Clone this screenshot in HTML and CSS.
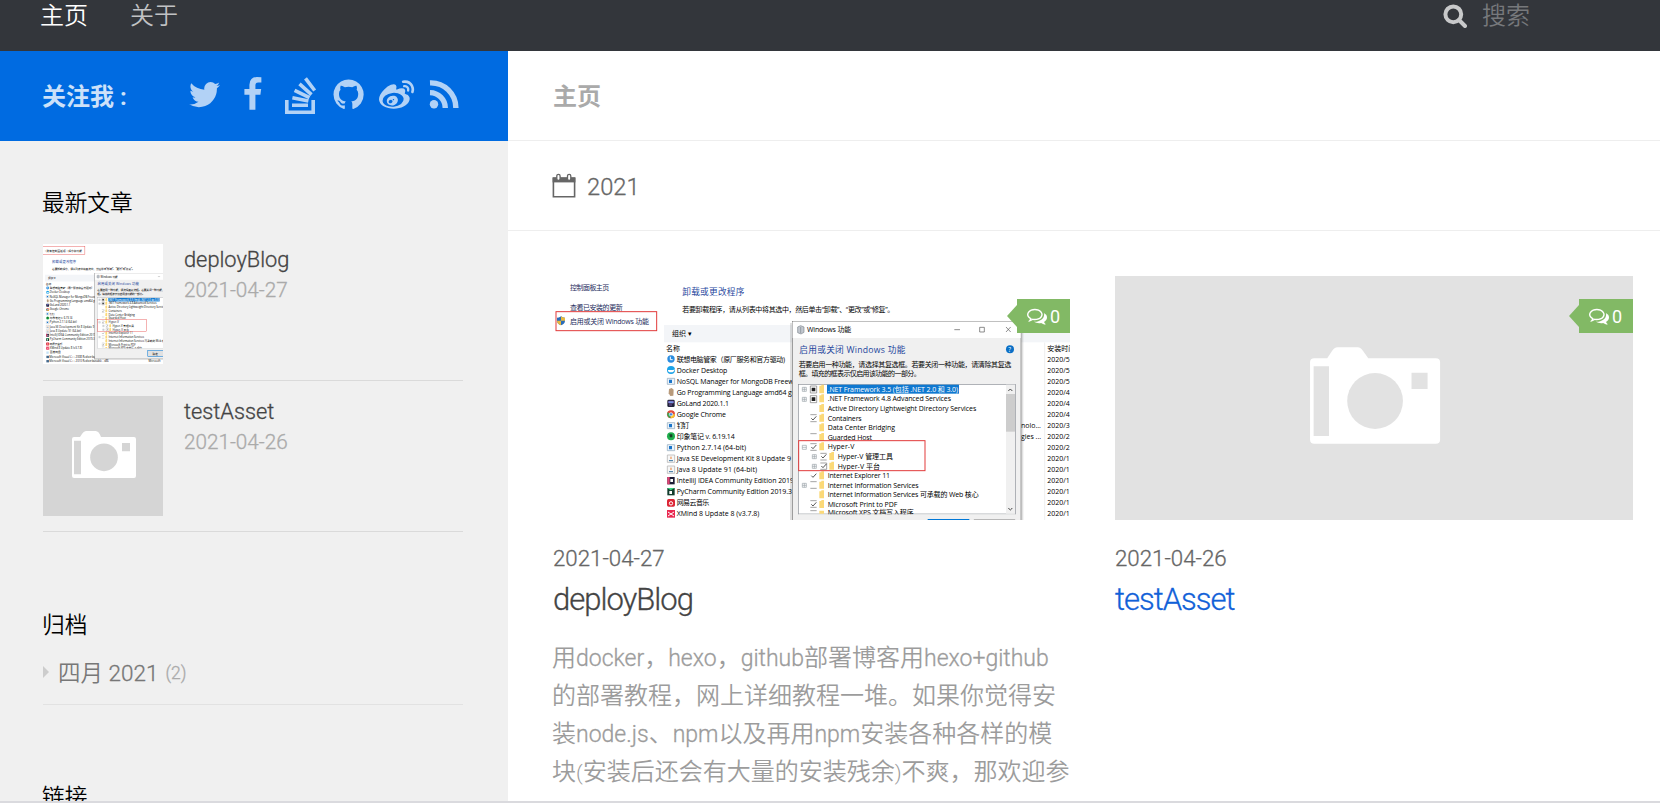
FILE: index.html
```html
<!DOCTYPE html>
<html lang="zh-CN">
<head>
<meta charset="utf-8">
<title>主页</title>
<link rel="stylesheet" href="styles.css">
</head>
<body>
<svg class="defs" aria-hidden="true">
  <symbol id="comments" viewBox="0 0 1792 1792"><path d="M704 384q-153 0-286 52t-211.500 141-78.500 191q0 82 53 158t149 132l97 56-35 84q34-20 62-39l44-31 53 10q78 14 153 14 153 0 286-52t211.500-141 78.500-191-78.500-191-211.500-141-286-52zm0-128q191 0 353.500 68.500t256.500 186.500 94 257-94 257-256.500 186.500-353.500 68.500q-86 0-176-16-124 88-278 128-36 9-86 16h-3q-11 0-20.500-8t-11.500-21q-1-3-1-6.500t.5-6.500 2-6l2.500-5 3.500-5.500 4-5 4.500-5 4-4.500q5-6 23-25t26-29.500 22.500-29 25-38.500 20.500-44q-124-72-195-177t-71-224q0-139 94-257t256.500-186.500 353.500-68.500zm822 1169q10 24 20.500 44t25 38.500 22.500 29 26 29.500 23 25q1 1 4 4.500t4.500 5 4 5 3.500 5.500l2.500 5 2 6 .5 6.500-1 6.500q-3 14-13 22t-22 7q-50-7-86-16-154-40-278-128-90 16-176 16-271 0-472-132 58 4 88 4 161 0 309-45t264-129q125-92 192-212t67-254q0-77-23-152 129 71 204 178t75 230q0 120-71 224.500t-195 176.500z"/></symbol>
  <g id="shot" transform="translate(540 265) scale(.33333)">
    <rect x="-60" y="-60" width="1740" height="960" fill="#fff"/>
    <rect x="345" y="-40" width="335" height="66" class="mark"/>
    <text x="372" y="4" class="st" textLength="286">› 所有控制面板项 › 程序和功能</text>
    <text x="90" y="76" class="st navy" textLength="118">控制面板主页</text>
    <text x="90" y="136" class="st navy" textLength="158">查看已安装的更新</text>
    <path d="M51 158q12-1 12-5 1 4 12 5v9q0 9-12 14-12-5-12-14z" fill="#2b6cb8"/><path d="M63 153q1 4 12 5v9H63zM51 167h12v14q-12-5-12-14z" fill="#e8b93c"/>
    <text x="90" y="176" class="st navy" textLength="237">启用或关闭 Windows 功能</text>
    <rect x="48" y="140" width="302" height="57" class="mark"/>
    <text x="427" y="91" class="st head" textLength="186">卸载或更改程序</text>
    <text x="427" y="142" class="st" textLength="636">若要卸载程序，请从列表中将其选中，然后单击“卸载”、“更改”或“修复”。</text>
    <rect x="372" y="180" width="1300" height="52" fill="#f3f5f8"/>
    <text x="396" y="212" class="st">组织 ▾</text>
    <text x="378" y="257" class="st">名称</text>
    <path d="M1514 233V900" stroke="#e5e5e5" stroke-width="2"/>
    <circle cx="393" cy="282" r="11" fill="#2a8de0"/><path d="M391 275v9h7" stroke="#fff" stroke-width="3" fill="none"/>
    <circle cx="393" cy="315" r="12" fill="#1ba3e8"/><path d="M384 315h16l4-3q-1 10-11 10t-9-7z" fill="#fff"/>
    <g fill="#eaf3fb" stroke="#8ba4b8" stroke-width="2"><path d="M382 340h22v18h-22zM382 473h22v18h-22zM382 539h22v18h-22z"/></g>
    <path d="M387 344h9v10h-9zM387 477h9v10h-9zM387 543h9v10h-9z" fill="#1b75c9"/>
    <path d="M387 372l8-3 6 5-1 18-9 1-5-8z" fill="#b89a7b"/>
    <rect x="382" y="404" width="22" height="22" rx="4" fill="#20243a"/><path d="M386 409h14v5h-14zM387 420h9" stroke="#a869dd" stroke-width="2" fill="#4eb7e8"/>
    <circle cx="393" cy="448" r="12" fill="#e34b3c"/><path d="M393 448l-10-6q-5 12 8 18z" fill="#36a853"/><path d="M393 448h12q-1 12-13 12z" fill="#f7c52b"/><circle cx="393" cy="448" r="5" fill="#4285e8" stroke="#fff" stroke-width="2"/>
    <circle cx="393" cy="514" r="12" fill="#1fae4c"/><path d="M388 508h9v9h-7z" fill="#163e25"/>
    <g fill="#f7f7f7" stroke="#aaa" stroke-width="2"><path d="M382 570h22v22h-22zM382 603h22v22h-22z"/></g>
    <path d="M387 587h12M387 620h12" stroke="#35719f" stroke-width="3"/><path d="M393 575v7M393 608v7" stroke="#e97e31" stroke-width="3"/>
    <rect x="382" y="636" width="22" height="22" fill="#1d1c35"/><path d="M382 636h7v22h-7z" fill="#e44374"/><path d="M391 642h8v9h-8z" fill="#fff"/>
    <rect x="382" y="669" width="22" height="22" fill="#123d2d"/><path d="M382 669h22l-12 7z" fill="#39d681"/><path d="M388 678h8v9h-8z" fill="#fff"/>
    <rect x="381" y="702" width="24" height="23" rx="5" fill="#dc2434"/><circle cx="393" cy="715" r="5" fill="none" stroke="#fff" stroke-width="3"/>
    <rect x="381" y="735" width="24" height="23" fill="#e92950"/><path d="M384 741l9 6 9-6M384 753l9-6 9 6" stroke="#fff" stroke-width="3" fill="none"/>
    <rect x="383" y="772" width="18" height="18" fill="#c4e1f5"/><rect x="383" y="805" width="20" height="18" fill="#44698e"/><rect x="383" y="838" width="20" height="18" fill="#44698e"/>
    <g class="st">
      <text x="410" y="290" textLength="325">联想电脑管家（原厂服务和官方驱动)</text>
      <text x="410" y="323" textLength="152">Docker Desktop</text>
      <text x="410" y="356" textLength="382">NoSQL Manager for MongoDB Freeware</text>
      <text x="410" y="389" textLength="386">Go Programming Language amd64 go1.1</text>
      <text x="410" y="422" textLength="157">GoLand 2020.1.1</text>
      <text x="410" y="455" textLength="148">Google Chrome</text>
      <text x="410" y="489" textLength="38">钉钉</text>
      <text x="410" y="522" textLength="174">印象笔记 v. 6.19.14</text>
      <text x="410" y="555" textLength="208">Python 2.7.14 (64-bit)</text>
      <text x="410" y="588" textLength="343">Java SE Development Kit 8 Update 9</text>
      <text x="410" y="621" textLength="241">Java 8 Update 91 (64-bit)</text>
      <text x="410" y="654" textLength="352">IntelliJ IDEA Community Edition 2019</text>
      <text x="410" y="687" textLength="346">PyCharm Community Edition 2019.3</text>
      <text x="410" y="721" textLength="98">网易云音乐</text>
      <text x="410" y="754" textLength="248">XMind 8 Update 8 (v3.7.8)</text>
      <text x="410" y="787">百度网盘</text>
      <text x="405" y="822">Microsoft Visual C++ 2008 Redistributable</text>
      <text x="405" y="855">Microsoft Visual C++ 2010 Redistributable - x86</text>
      <text x="1170" y="855">Microsoft</text>
      <text x="1443" y="489">nolo...</text>
      <text x="1443" y="522">gies ...</text>
      <text x="1522" y="257">安装时间</text>
      <text x="1522" y="290">2020/5</text><text x="1522" y="323">2020/5</text><text x="1522" y="356">2020/5</text><text x="1522" y="389">2020/4</text><text x="1522" y="422">2020/4</text><text x="1522" y="455">2020/4</text><text x="1522" y="489">2020/3</text><text x="1522" y="522">2020/2</text><text x="1522" y="555">2020/2</text><text x="1522" y="588">2020/1</text><text x="1522" y="621">2020/1</text><text x="1522" y="654">2020/1</text><text x="1522" y="687">2020/1</text><text x="1522" y="721">2020/1</text><text x="1522" y="754">2020/1</text>
    </g>
    <rect x="750" y="174" width="700" height="664" fill="#000" opacity=".12"/>
    <rect x="757" y="169" width="686" height="660" fill="#f0f0f0" stroke="#777" stroke-width="2"/>
    <rect x="758" y="170" width="684" height="49" fill="#fff"/>
    <path d="M773 186l9-4 10 4v16l-9 5-10-4z" fill="#c3c8cf" stroke="#7f868e" stroke-width="2"/><path d="M782 186v18" stroke="#7f868e" stroke-width="2"/>
    <text x="801" y="202" class="st" textLength="133">Windows 功能</text>
    <path d="M1243 194h17M1319 187h14v14h-14zM1398 186l14 15m0-15l-14 15" fill="none" stroke="#555" stroke-width="2"/>
    <text x="778" y="263" class="st head" textLength="318">启用或关闭 Windows 功能</text>
    <circle cx="1410" cy="253" r="12" fill="#0a6fc6"/><text x="1405" y="260" class="st q">?</text>
    <text x="776" y="307" class="st" textLength="638">若要启用一种功能，请选择其复选框。若要关闭一种功能，请清除其复选</text>
    <text x="776" y="334" class="st" textLength="366">框。填充的框表示仅启用该功能的一部分。</text>
    <rect x="775" y="358" width="651" height="389" fill="#fff" stroke="#8a8f96" stroke-width="2"/>
    <rect x="1398" y="359" width="27" height="387" fill="#f0f0f0"/><rect x="1398" y="387" width="27" height="113" fill="#cdcdcd"/>
    <path d="M1405 378l6-6 6 6M1405 729l6 6 6-6" fill="none" stroke="#444" stroke-width="3"/>
    <rect x="861" y="359" width="396" height="27" fill="#0f78d0"/>
    <g class="st">
      <text x="863" y="380" textLength="391" fill="#fff">.NET Framework 3.5 (包括 .NET 2.0 和 3.0)</text>
      <text x="863" y="409" textLength="370">.NET Framework 4.8 Advanced Services</text>
      <text x="863" y="438" textLength="446">Active Directory Lightweight Directory Services</text>
      <text x="863" y="467" textLength="102">Containers</text>
      <text x="863" y="496" textLength="202">Data Center Bridging</text>
      <text x="863" y="525" textLength="133">Guarded Host</text>
      <text x="863" y="553" textLength="80">Hyper-V</text>
      <text x="893" y="582" textLength="166">Hyper-V 管理工具</text>
      <text x="893" y="611" textLength="127">Hyper-V 平台</text>
      <text x="863" y="640" textLength="187">Internet Explorer 11</text>
      <text x="863" y="668" textLength="273">Internet Information Services</text>
      <text x="863" y="697" textLength="453">Internet Information Services 可承载的 Web 核心</text>
      <text x="863" y="726" textLength="209">Microsoft Print to PDF</text>
      <text x="863" y="751" textLength="258">Microsoft XPS 文档写入程序</text>
    </g>
    <rect x="776" y="748" width="649" height="12" fill="#f0f0f0"/>
    <path d="M838 362h6v-3h8v26h-14zM838 391h6v-3h8v24h-14zM838 420h6v-3h8v24h-14zM838 449h6v-3h8v24h-14zM838 478h6v-3h8v24h-14zM838 507h6v-3h8v24h-14zM838 535h6v-3h8v24h-14zM868 564h6v-3h8v24h-14zM868 593h6v-3h8v24h-14zM838 622h6v-3h8v24h-14zM838 650h6v-3h8v24h-14zM838 679h6v-3h8v24h-14zM838 708h6v-3h8v24h-14zM838 737h14v9h-14z" fill="#fbd978"/>
    <path d="M811 363h19v21h-19zM811 392h19v21h-19z" fill="#fff" stroke="#777" stroke-width="2"/><path d="M815 368h11v11h-11zM815 397h11v11h-11z" fill="#222"/>
    <path d="M811 449h19m0 21h-19M811 506h19M811 536h19m0 20h-19M841 565h19m0 20h-19M841 594h19v19h-19M811 650h19m0 20h-19M811 707h19m0 20h-19M811 737h19" fill="none" stroke="#777" stroke-width="2"/>
    <path d="M814 460l5 5 10-11M814 546l5 5 10-11M844 574l5 5 10-11M844 603l5 5 10-11M814 632l5 5 10-11M814 718l5 5 10-11" fill="none" stroke="#333" stroke-width="2.500"/>
    <path d="M787 367h12v12h-12zm0 6h12m-6-6v12M787 397h12v12h-12zm0 6h12m-6-6v12M787 541h12v12h-12zm0 6h12M817 569h12v12h-12zm0 6h12m-6-6v12M817 598h12v12h-12zm0 6h12m-6-6v12M787 655h12v12h-12zm0 6h12m-6-6v12" fill="none" stroke="#9aa1a8" stroke-width="2"/>
    <rect x="776" y="527" width="379" height="90" class="mark"/>
    <rect x="1165" y="764" width="121" height="48" fill="#e1e1e1" stroke="#0078d7" stroke-width="4"/><text x="1202" y="796" class="st">确定</text>
    <rect x="1303" y="764" width="121" height="48" fill="#e1e1e1" stroke="#adadad" stroke-width="3"/>
  </g>
</svg>

<div class="page">
  <header class="topbar">
    <nav class="menu"><a class="current">主页</a><a>关于</a></nav>
    <div class="search">
      <svg width="24" height="24" viewBox="0 0 24 24"><circle cx="10.300" cy="10.300" r="7.900"/><path d="M16 16l6 6"/></svg>
      <span>搜索</span>
    </div>
  </header>
  <div class="columns">
    <aside class="sidebar">
      <div class="follow">
        <b>关注我 :</b>
        <div class="social">
          <svg viewBox="0 0 1792 1792"><path d="M1684 408q-67 98-162 167 1 14 1 42 0 130-38 259.500t-115.500 248.500-184.500 210.500-258 146-323 54.500q-271 0-496-145 35 4 78 4 225 0 401-138-105-2-188-64.500t-114-159.500q33 5 61 5 43 0 85-11-112-23-185.500-111.500t-73.500-205.500v-4q68 38 146 41-66-44-105-115t-39-154q0-88 44-163 121 149 294.500 238.500t371.500 99.500q-8-38-8-74 0-134 94.500-228.500t228.500-94.500q140 0 236 102 109-21 205-78-37 115-142 178 93-10 186-50z"/></svg>
          <svg viewBox="0 0 1792 1792"><path d="M1343 12v264h-157q-86 0-116 36t-30 108v189h293l-39 296h-254v759h-306v-759h-255v-296h255v-218q0-186 104-288.500t277-102.500q147 0 228 12z"/></svg>
          <svg viewBox="0 0 35.200 35.200" class="line"><path d="M3.800 23v12.200h26.400V23M9 28.300h16M9.400 20.700l16 3.200M11.600 13.300l14.900 7.400M16.500 6.900l12 10.700M22.500 1.300l9.200 12.200"/></svg>
          <svg viewBox="0 0 1792 1792"><path d="M896 128q209 0 385.500 103t279.500 279.500 103 385.500q0 251-146.500 451.500t-378.500 277.500q-27 5-40-7t-13-30q0-3 .5-76.500t.5-134.500q0-97-52-142 57-6 102.500-18t94-39 81-66.500 53-105 20.500-150.500q0-119-79-206 37-91-8-204-28-9-81 11t-92 44l-38 24q-93-26-192-26t-192 26q-16-11-42.500-27t-83.500-38.500-85-13.500q-45 113-8 204-79 87-79 206 0 85 20.500 150t52.500 105 80.500 67 94 39 102.500 18q-39 36-49 103-21 10-45 15t-57 5-65.500-21.500-55.500-62.500q-19-32-48.500-52t-49.500-24l-20-3q-21 0-29 4.500t-5 11.500 9 14 13 12l7 5q22 10 43.500 38t31.500 51l10 23q13 38 44 61.500t67 30 69.500 7 55.500-3.500l23-4q0 38 .5 88.500t.5 54.500q0 18-13 30t-40 7q-232-77-378.500-277.500t-146.500-451.500q0-209 103-385.500t279.500-279.500 385.500-103z"/></svg>
          <svg viewBox="0 0 1792 1792"><path d="M675 1284q21-34 11-69t-45-50q-34-14-73 1t-60 46q-22 34-13 68.500t43 50.500 74.500 2.500 62.500-50.500zm94-121q8-13 3.500-26.500t-17.500-18.500q-14-5-28.500.5t-21.500 18.500q-17 31 13 45 14 5 29-.5t22-18.500zm174 107q-45 102-158 150t-224 12q-107-34-147.500-126.500t6.500-187.500q47-93 151.500-139t210.500-19q111 29 158.500 119.500t2.500 190.500zm312-160q-9-96-89-170t-208.500-109-274.500-21q-223 23-369.500 141.500t-132.500 264.500q9 96 89 170t208.500 109 274.500 21q223-23 369.500-141.500t132.500-264.500zm308-4q0 68-37 139.500t-109 137-168.500 117.500-226 83-270.500 31-275-33.500-240.500-93-171.500-151-65-199.500q0-115 69.500-245t197.500-258q169-169 341.500-236t246.500 7q65 64 20 209-4 14-1 20t10 7 14.500-.5 13.500-3.500l6-2q139-59 246-59t153 61q45 63 0 178-2 13-4.500 20t4.500 12.500 12 7.500 17 6q57 18 103 47t80 81.500 34 116.500zm-74-624q42 47 54.500 108.500t-6.500 117.500q-8 23-29.500 34t-44.500 4q-23-8-34-29.500t-4-44.500q20-63-24-111t-107-35q-24 5-45-8t-25-37q-5-24 8-44.500t37-25.500q60-13 119 5.500t101 65.500zm181-163q87 96 112.500 222.500t-13.500 241.500q-9 27-34 40t-52 4-40-34-5-52q28-82 10-172t-80-158q-62-69-148-95.500t-173-8.500q-28 6-52-9.500t-30-43.500 9.500-51.500 43.500-29.500q123-26 244 11.500t208 134.500z"/></svg>
          <svg viewBox="0 0 35.200 35.200"><circle cx="7" cy="27.300" r="4.200"/><path class="arc" d="M3 15.600A15.500 15.500 0 0 1 18.300 31M3 5.900A25 25 0 0 1 28.900 31"/></svg>
        </div>
      </div>
      <section class="widget recent">
        <h3>最新文章</h3>
        <article class="post">
          <svg class="thumb" viewBox="659 246 308.500 308.500"><use href="#shot"/></svg>
          <div><h4>deployBlog</h4><time>2021-04-27</time></div>
        </article>
        <article class="post">
          <svg class="thumb" viewBox="129 498 360 360"><path fill="#d5d5d5" d="M129 498h360v360H129z"/><path fill="#fff" d="M222 621h18q10-18 18-18h29q10 0 16 18h99q6 0 6 6v111q0 6-6 6H222q-6 0-6-6V627q0-6 6-6z"/><path fill="#d5d5d5" d="M222 632h21v101h-21zM366 639h24v25h-24z"/><circle cx="312" cy="682" r="41.500" fill="#d5d5d5"/></svg>
          <div><h4>testAsset</h4><time>2021-04-26</time></div>
        </article>
      </section>
      <section class="widget archive">
        <h3>归档</h3>
        <div class="entry"><i></i><span>四月 <span class="num">2021</span></span><small>(2)</small></div>
      </section>
      <section class="widget links"><h3>链接</h3></section>
    </aside>
    <main class="content">
      <div class="crumb">主页</div>
      <div class="year">
        <svg width="24" height="26" viewBox="0 0 24 26"><path d="M1.400 5.500h21.200v18.200H1.400z" fill="none" stroke="#666" stroke-width="1.600"/><path d="M.6 4.200h22.800v5.200H.6z" fill="#666"/><rect x="4.800" y="1.300" width="3.300" height="6" rx="1.600" fill="#fff" stroke="#666" stroke-width="1.300"/><rect x="15.500" y="1.300" width="3.300" height="6" rx="1.600" fill="#fff" stroke="#666" stroke-width="1.300"/></svg>
        <span>2021</span>
      </div>
      <div class="cards">
        <article class="card">
          <div class="cover narrow">
            <svg viewBox="553 276 517 244"><use href="#shot"/></svg>
            <span class="badge"><svg width="20" height="20"><use href="#comments"/></svg>0</span>
          </div>
          <time>2021-04-27</time>
          <h2>deployBlog</h2>
          <p>用<span class="en">docker</span>，<span class="en">hexo</span>，<span class="en">github</span>部署博客用<span class="en">hexo+github</span><br>的部署教程，网上详细教程一堆。如果你觉得安<br>装<span class="en">node.js</span>、<span class="en">npm</span>以及再用<span class="en">npm</span>安装各种各样的模<br>块<span class="paren">(</span>安装后还会有大量的安装残余<span class="paren">)</span>不爽，那欢迎参</p>
        </article>
        <article class="card">
          <div class="cover">
            <svg viewBox="42 48 1450 732" preserveAspectRatio="none"><path fill="#e2e2e2" d="M42 48h1450v732H42z"/><path fill="#fff" d="M600 295h36l13-21q7-12 16-12h56q9 0 16 12l14 21h189q12 0 12 12v232q0 12-12 12H600q-12 0-12-12V307q0-12 12-12z"/><path fill="#e2e2e2" d="M598 319h43v209h-43zM872 338h45v49h-45z"/><ellipse cx="770" cy="423" rx="78" ry="84" fill="#e2e2e2"/></svg>
            <span class="badge"><svg width="20" height="20"><use href="#comments"/></svg>0</span>
          </div>
          <time>2021-04-26</time>
          <h2 class="hover">testAsset</h2>
        </article>
      </div>
    </main>
  </div>
</div>
</body>
</html>
```

FILE: styles.css
```css
* { box-sizing: border-box; margin: 0; padding: 0; }
body {
  height: 807px;
  overflow: hidden;
  background: #fff;
  font-family: Roboto, "Noto Sans CJK SC", sans-serif;
  font-size: 24px;
  font-weight: 350;
  color: #666;
}
h2, h3, h4 { font-weight: 350; }
svg { display: block; flex: none; }
.defs { position: absolute; width: 0; height: 0; }

.page { height: 803px; overflow: hidden; border-bottom: 2px solid #dadade; }
.topbar {
  display: flex;
  justify-content: space-between;
  height: 51px;
  padding: 0 130px 0 41px;
  background: #33363b;
  line-height: 32px;
}
.menu { display: flex; gap: 42px; margin-left: -1px; color: #c1c2c4; }
.menu .current { color: #fff; }
.search { display: flex; gap: 15px; color: #77797c; line-height: 32px; }
.search svg { margin-top: 4px; fill: none; stroke: #c8c9ca; stroke-width: 4; stroke-linecap: round; }

.columns { display: flex; height: 750px; }
.sidebar { width: 508px; flex: none; background: #f0f0f0; overflow: hidden; }
.follow {
  display: flex;
  align-items: flex-start;
  height: 90px;
  padding-left: 42px;
  background: #006be1;
  color: #cce1f9;
}
.follow b { width: 145px; line-height: 92px; }
.social { display: flex; gap: 12.8px; padding-top: 26px; }
.social svg { width: 35.2px; height: 35.2px; fill: #b2d2f6; overflow: visible; }
.social .line { fill: none; stroke: #b2d2f6; stroke-width: 3.6; }
.social .arc { fill: none; stroke: #b2d2f6; stroke-width: 5.4; }

.widget { margin: 0 45px 0 43px; }
.widget h3 { margin-left: -1px; font-size: 22.7px; line-height: 30px; color: #000; }
.recent { padding-top: 48px; }
.recent h3 { margin-bottom: 25px; }
.post { display: flex; gap: 21px; height: 137px; border-bottom: 1px solid #dadada; margin-bottom: 15px; }
.post + .post { height: 136px; }
.thumb { width: 120px; height: 120px; }
.post h4 { padding-top: 1px; font-size: 21.8px; line-height: 30px; color: #444; }
.post time { display: block; font-size: 20.7px; line-height: 30px; color: #aaa; }
.archive { padding-top: 64px; }
.entry {
  display: flex;
  align-items: center;
  height: 64px;
  border-bottom: 1px solid #e2e2e2;
  padding-bottom: 3px;
  font-size: 22.5px;
  color: #777;
}
.entry i { border: 6px solid transparent; border-left-color: #ccc; border-right: 0; margin: 2px 9px 0 0; }
.entry .num { font-size: 22.5px; }
.entry small { margin: 4px 0 0 7px; font-size: 17.5px; color: #aaa; }
.links { padding-top: 78px; }

.content { flex: 1; }
.crumb, .year { height: 90px; padding-left: 44px; border-bottom: 1px solid #eee; line-height: 92px; }
.crumb { padding-left: 45px; font-weight: 700; color: #aaa; }
.year { display: flex; align-items: center; gap: 11px; font-size: 23.7px; }
.year svg { margin-top: 1px; }
.year span { padding-top: 3px; }
.cards { display: grid; grid-template-columns: 518px 518px; gap: 44px; padding: 45px 0 0 45px; }
.cover { position: relative; height: 244px; }
.cover > svg { width: 518px; height: 244px; }
.narrow, .narrow > svg { width: 517px; }
.badge {
  position: absolute;
  top: 23px;
  right: 0;
  display: flex;
  align-items: center;
  gap: 3px;
  width: 54px;
  height: 34px;
  padding-left: 10px;
  background: #82b965;
  color: #fff;
  font-size: 18px;
  font-weight: 400;
}
.badge svg { fill: #fff; }
.badge::before {
  content: "";
  position: absolute;
  left: -10px;
  top: 6px;
  border: 11px solid transparent;
  border-left: 0;
  border-right: 10px solid #82b965;
}
.narrow .badge { width: 53px; }
.card time { display: block; margin-top: 22px; font-size: 22.3px; line-height: 32px; }
.card h2 { padding-top: 2px; font-size: 31px; line-height: 48px; letter-spacing: -1px; color: #444; }
.card h2.hover { color: #1161d8; }
.card p { margin: 15px 0 0 -1px; line-height: 38.1px; color: #9c9c9c; white-space: nowrap; }
.card .en { font-size: 23px; line-height: 1; }
.card .paren { font-size: 21px; line-height: 1; }
time, h2, h4, .en, .num, .year span, .entry small { -webkit-text-stroke: .3px currentColor; }

.st { font-family: "Open Sans", "Noto Sans CJK SC", sans-serif; font-size: 21px; font-weight: 400; color: #222; }
.navy { fill: #1d2b5c; }
.head { font-size: 26px; fill: #1d459c; }
.q { fill: #fff; font-size: 19px; }
.mark { fill: none; stroke: #e23b3b; stroke-width: 3; }
```
